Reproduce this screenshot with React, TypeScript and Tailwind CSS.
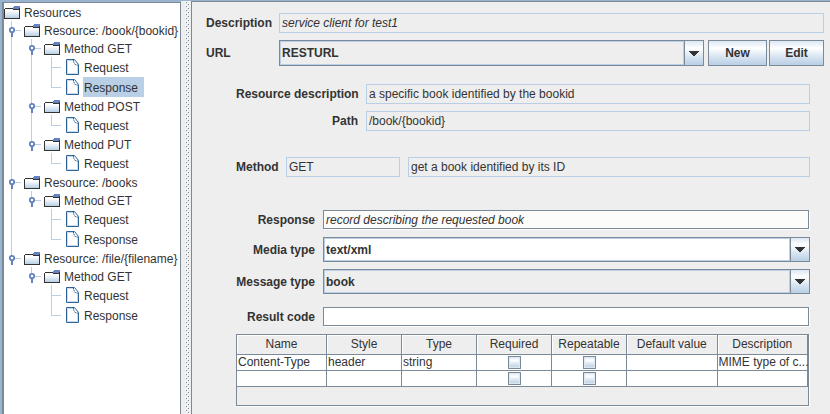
import React from "react";

type Guide = "blank" | "pass" | "tee" | "end";
type Row = { label: string; guides: Guide[]; leaf?: boolean; selected?: boolean };

const rows: Row[] = [
  { label: "Resources", guides: [] },
  { label: "Resource: /book/{bookid}", guides: ["tee"] },
  { label: "Method GET", guides: ["pass", "tee"] },
  { label: "Request", guides: ["pass", "pass", "tee"], leaf: true },
  { label: "Response", guides: ["pass", "pass", "end"], leaf: true, selected: true },
  { label: "Method POST", guides: ["pass", "tee"] },
  { label: "Request", guides: ["pass", "pass", "end"], leaf: true },
  { label: "Method PUT", guides: ["pass", "end"] },
  { label: "Request", guides: ["pass", "blank", "end"], leaf: true },
  { label: "Resource: /books", guides: ["tee"] },
  { label: "Method GET", guides: ["pass", "end"] },
  { label: "Request", guides: ["pass", "blank", "tee"], leaf: true },
  { label: "Response", guides: ["pass", "blank", "end"], leaf: true },
  { label: "Resource: /file/{filename}", guides: ["end"] },
  { label: "Method GET", guides: ["blank", "end"] },
  { label: "Request", guides: ["blank", "blank", "tee"], leaf: true },
  { label: "Response", guides: ["blank", "blank", "end"], leaf: true },
];

function Connector({ kind, height, handle }: { kind: Guide; height: number; handle: boolean }) {
  const mid = height / 2;
  return (
    <svg width="20" height={height} className="shrink-0" shapeRendering="crispEdges" aria-hidden="true">
      {kind !== "blank" && (
        <rect x="7" y="0" width="1" height={kind === "end" ? mid + 1 : height} fill="#b8cfe5" />
      )}
      {(kind === "tee" || kind === "end") && <rect x="7" y={mid} width="10" height="1" fill="#b8cfe5" />}
      {handle && (
        <g shapeRendering="auto">
          <rect x="7" y="11" width="2" height="5" fill="#6382bf" />
          <circle cx="8" cy="9" r="2.2" fill="#fff" stroke="#6382bf" strokeWidth="1.8" />
        </g>
      )}
    </svg>
  );
}

function FolderIcon() {
  return (
    <svg width="19" height="18" className="shrink-0" shapeRendering="crispEdges" aria-hidden="true">
      <defs>
        <linearGradient id="folder" x1="0" y1="0" x2="0" y2="1">
          <stop offset="0.2" stopColor="#fff" />
          <stop offset="1" stopColor="#b8cfe5" />
        </linearGradient>
      </defs>
      <rect x="1" y="6" width="14" height="9" fill="url(#folder)" />
      <path d="M10 3h6v2h-6zM9 4h6v2h-6z" fill="#6382bf" />
      <path d="M1 5h8v1h-8zM0 6h1v10h-1zM1 15h14v1h-14zM15 5h1v11h-1zM9 6h6v1h-6z" fill="#333" />
    </svg>
  );
}

function FileIcon() {
  return (
    <svg width="19" height="20" className="shrink-0" aria-hidden="true">
      <path d="M2.5 2.5h8l4 5v10h-12z" fill="#fff" stroke="#2f6297" />
      <path d="M3.5 16.5v-13h6M3.5 16.5h10v-8" fill="none" stroke="#c9dcee" />
      <path d="M9.5 3v2l1 1v1l2 1h2" fill="none" stroke="#2f6297" strokeDasharray="1.5 0.7" />
    </svg>
  );
}

function Tree() {
  return (
    <ul className="w-[177px] shrink-0 overflow-hidden border-t border-r border-[#7a8a99] bg-white">
      {rows.map((row, i) => {
        const h = row.leaf ? 20 : 18;
        return (
          <li key={i} className={row.leaf ? "flex h-5 leading-[22px]" : "flex h-[18px] leading-5"}>
            {row.guides.map((g, j) => (
              <Connector key={j} kind={g} height={h} handle={!row.leaf && j === row.guides.length - 1} />
            ))}
            {row.leaf ? <FileIcon /> : <FolderIcon />}
            <span className={row.selected ? "bg-[#b8cfe5] pr-1.5 pl-px whitespace-nowrap" : "pl-px whitespace-nowrap"}>
              {row.label}
            </span>
          </li>
        );
      })}
    </ul>
  );
}

function Splitter() {
  return (
    <div className="flex w-[10px] shrink-0 border-t border-[#9ab3cf] bg-[#eee] pl-1">
      <svg width="5" height="100%" shapeRendering="crispEdges" aria-hidden="true">
        <defs>
          <pattern id="bumps" width="4" height="4" patternUnits="userSpaceOnUse">
            <rect x="0" y="0" width="1" height="1" fill="#fff" />
            <rect x="1" y="1" width="1" height="1" fill="#7a8a99" />
            <rect x="2" y="2" width="1" height="1" fill="#fff" />
            <rect x="3" y="3" width="1" height="1" fill="#7a8a99" />
          </pattern>
        </defs>
        <rect width="5" height="100%" fill="url(#bumps)" />
      </svg>
    </div>
  );
}

const metal = "bg-[linear-gradient(#dde8f3,#fff_30%,#dde8f3_60%,#b8cfe5)]";

function Combo({ id, value, tall, white }: { id: string; value: string; tall?: boolean; white?: boolean }) {
  return (
    <div className={`grid min-w-0 flex-1 border border-[#7a8a99] ${tall ? "h-[26px]" : "h-[25px]"}`}>
      <select
        id={id}
        className={`col-start-1 row-start-1 w-full appearance-none border border-[#b8cfe5] pl-px font-bold outline-none ${white ? "bg-white" : "bg-[#eee]"}`}
      >
        <option>{value}</option>
      </select>
      <span
        className={`pointer-events-none col-start-1 row-start-1 flex w-[19px] items-center justify-center justify-self-end border-l border-[#7a8a99] shadow-[-1px_0_0_#b8cfe5] ${metal}`}
      >
        <svg width="10" height="5" shapeRendering="crispEdges" aria-hidden="true">
          <path d="M0 0h10v1h-1v1h-1v1h-1v1h-1v1h-2v-1h-1v-1h-1v-1h-1v-1h-1z" fill="#333" />
        </svg>
      </span>
    </div>
  );
}

const readOnly = "h-5 min-w-0 border border-[#b8cfe5] bg-[#eee] px-0.5 outline-none";
const editable =
  "mr-px h-[19px] min-w-0 flex-1 border border-[#7a8a99] px-0.5 outline-none shadow-[1px_1px_0_#fff]";
const button = `h-[26px] border border-[#7a8a99] text-center font-bold ${metal}`;
const topLabel = "w-[73px] shrink-0 font-bold";
const wideLabel = "w-[130px] shrink-0 pr-2 text-right font-bold whitespace-nowrap";
const formLabel = "w-[87px] shrink-0 pr-2 text-right font-bold whitespace-nowrap";

const columns = ["Name", "Style", "Type", "Required", "Repeatable", "Default value", "Description"];
const params = [
  ["Content-Type", "header", "string", "", "", "", "MIME type of c..."],
  ["", "", "", "", "", "", ""],
];

function ParamTable() {
  return (
    <div className="mr-px h-[72px] border border-[#7a8a99] shadow-[1px_1px_0_#fff]">
      <table className="w-full table-fixed border-separate border-spacing-0">
        <colgroup>
          <col className="w-[90px]" />
          <col className="w-[75px]" />
          <col className="w-[75px]" />
          <col className="w-[75px]" />
          <col className="w-[75px]" />
          <col />
          <col />
        </colgroup>
        <thead>
          <tr className="h-5">
            {columns.map((c) => (
              <th
                key={c}
                className="border-r border-b border-[#7a8a99] p-0 text-center leading-[19px] font-normal shadow-[inset_1px_1px_0_#fff]"
              >
                {c}
              </th>
            ))}
          </tr>
        </thead>
        <tbody>
          {params.map((cells, r) => (
            <tr key={r} className="h-4 bg-white">
              {cells.map((text, c) => (
                <td
                  key={c}
                  className="h-4 border-r border-b border-[#7a8a99] p-0 pl-px leading-[15px] whitespace-nowrap"
                >
                  {c === 3 || c === 4 ? (
                    <input
                      type="checkbox"
                      aria-label={columns[c]}
                      className={`mx-auto block size-[13px] appearance-none border border-[#7a8a99] shadow-[inset_0_0_0_1px_#dde8f3] checked:bg-[#7a8a99] ${metal}`}
                    />
                  ) : (
                    text
                  )}
                </td>
              ))}
            </tr>
          ))}
        </tbody>
      </table>
    </div>
  );
}

export default function App() {
  return (
    <div className="flex min-h-screen bg-[#eee] font-['Liberation_Sans',Arial,sans-serif] text-[12px] text-[#333]">
      <div className="flex shrink-0 border-t-2 border-l-2 border-[#9ab3cf]">
        <div className="w-0.5 bg-[#7a8a99]" />
        <Tree />
      </div>
      <Splitter />
      <main className="min-w-0 flex-1 border-t border-[#9ab3cf]">
        <div className="flex h-full flex-col border-t border-l border-[#7a8a99] pt-[11px] pr-1.5 pl-3.5">
          <div className="flex items-center">
            <label htmlFor="description" className={topLabel}>Description</label>
            <input id="description" readOnly defaultValue="service client for test1" className={`flex-1 italic ${readOnly}`} />
          </div>
          <div className="mt-[7px] flex items-center">
            <label htmlFor="url" className={topLabel}>URL</label>
            <Combo id="url" value="RESTURL" tall />
            <button type="button" className={`ml-1 w-[59px] ${button}`}>New</button>
            <button type="button" className={`ml-0.5 w-[55px] ${button}`}>Edit</button>
          </div>

          <div className="mt-[18px] flex flex-col pr-3.5 pl-[30px]">
            <div className="flex items-center">
              <label htmlFor="resource" className={wideLabel}>Resource description</label>
              <input id="resource" readOnly defaultValue="a specific book identified by the bookid" className={`flex-1 ${readOnly}`} />
            </div>
            <div className="mt-[7px] flex items-center">
              <label htmlFor="path" className={wideLabel}>Path</label>
              <input id="path" readOnly defaultValue="/book/{bookid}" className={`flex-1 ${readOnly}`} />
            </div>

            <div className="mt-[26px] flex items-center">
              <label htmlFor="method" className="w-[50px] shrink-0 font-bold">Method</label>
              <input id="method" readOnly defaultValue="GET" className={`w-[114px] ${readOnly}`} />
              <input aria-label="Method description" readOnly defaultValue="get a book identified by its ID" className={`ml-2 flex-1 ${readOnly}`} />
            </div>

            <div className="mt-[33px] flex items-center">
              <label htmlFor="response" className={formLabel}>Response</label>
              <input id="response" defaultValue="record describing the requested book" className={`bg-[#fcfcfa] italic ${editable}`} />
            </div>
            <div className="mt-2 flex items-center">
              <label htmlFor="media" className={formLabel}>Media type</label>
              <Combo id="media" value="text/xml" white />
            </div>
            <div className="mt-[7px] flex items-center">
              <label htmlFor="message" className={formLabel}>Message type</label>
              <Combo id="message" value="book" />
            </div>
            <div className="mt-[13px] mb-2 flex items-center">
              <label htmlFor="code" className={formLabel}>Result code</label>
              <input id="code" className={`bg-white ${editable}`} />
            </div>
            <ParamTable />
          </div>
        </div>
      </main>
    </div>
  );
}
